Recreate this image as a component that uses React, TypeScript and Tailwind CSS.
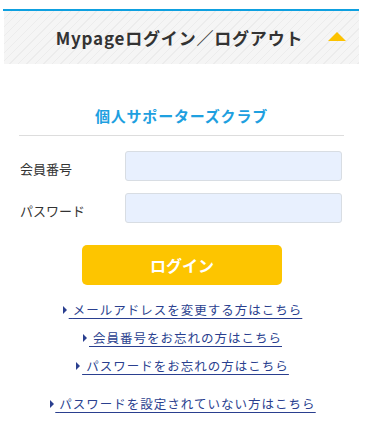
import React from "react";

const links = [
  { text: "メールアドレスを変更する方はこちら", mt: "mt-[17px]" },
  { text: "会員番号をお忘れの方はこちら", mt: "mt-[12px]" },
  { text: "パスワードをお忘れの方はこちら", mt: "mt-[12px]" },
  { text: "パスワードを設定されていない方はこちら", mt: "mt-[22px]" },
];

export default function App() {
  return (
    <div className="w-[366px] h-[433px] bg-white font-['Noto_Sans_CJK_JP','Noto_Sans',sans-serif] text-[#333]">
      {/* Accordion header */}
      <div className="pt-[9px] pl-[3px] pr-[7px]">
        <div className="h-[2px] bg-[#0ea0e0]" />
        <div className="ml-[1px] h-[53px] flex items-center justify-center relative bg-[repeating-linear-gradient(135deg,#f5f5f5_0,#f5f5f5_5px,#ececec_5px,#ececec_6px)]">
          <span className="text-[17px] font-bold tracking-[0.8px] text-[#333] ml-[-4px]">
            Mypageログイン／ログアウト
          </span>
          <span className="absolute right-[13px] top-[21px] w-0 h-0 border-l-[9px] border-r-[9px] border-b-[9px] border-l-transparent border-r-transparent border-b-[#fcc200]" />
        </div>
      </div>

      {/* Login box */}
      <div className="pl-[19px] pr-[22px] pt-[41px]">
        <h2 className="text-center text-[15px] font-bold text-[#1ea0e0] tracking-[0.8px] leading-[22px] pb-[8px] border-b border-[#dddddd]">
          個人サポーターズクラブ
        </h2>
        <div className="mt-[15px] flex flex-col gap-[12px] pr-[2px]">
          <div className="flex items-center">
            <label className="w-[106px] pl-[1px] text-[13px] mt-[6px]">会員番号</label>
            <div className="flex-1 h-[30px] rounded-[3px] border border-[#d8dde3] bg-[#e8f0fe]" />
          </div>
          <div className="flex items-center">
            <label className="w-[106px] pl-[1px] text-[13px] mt-[6px]">パスワード</label>
            <div className="flex-1 h-[30px] rounded-[3px] border border-[#d8dde3] bg-[#e8f0fe]" />
          </div>
        </div>
        <div className="mt-[22px] flex justify-center">
          <button className="w-[200px] h-[40px] rounded-[5px] bg-[#fdc500] text-white text-[16px] font-bold ml-[1px]">
            ログイン
          </button>
        </div>
        <div className="flex flex-col items-center ml-[2px]">
          {links.map((l) => (
            <a
              key={l.text}
              href="#"
              className={`${l.mt} flex items-center text-[12.5px] leading-[16px] tracking-[1px] text-[#2a3f8f] underline underline-offset-[3px]`}
            >
              <span className="mr-[2px] w-0 h-0 border-t-[4px] border-b-[4px] border-l-[4px] border-t-transparent border-b-transparent border-l-[#2a3f8f]" />
              <span className="underline">&nbsp;{l.text}</span>
            </a>
          ))}
        </div>
      </div>
    </div>
  );
}
